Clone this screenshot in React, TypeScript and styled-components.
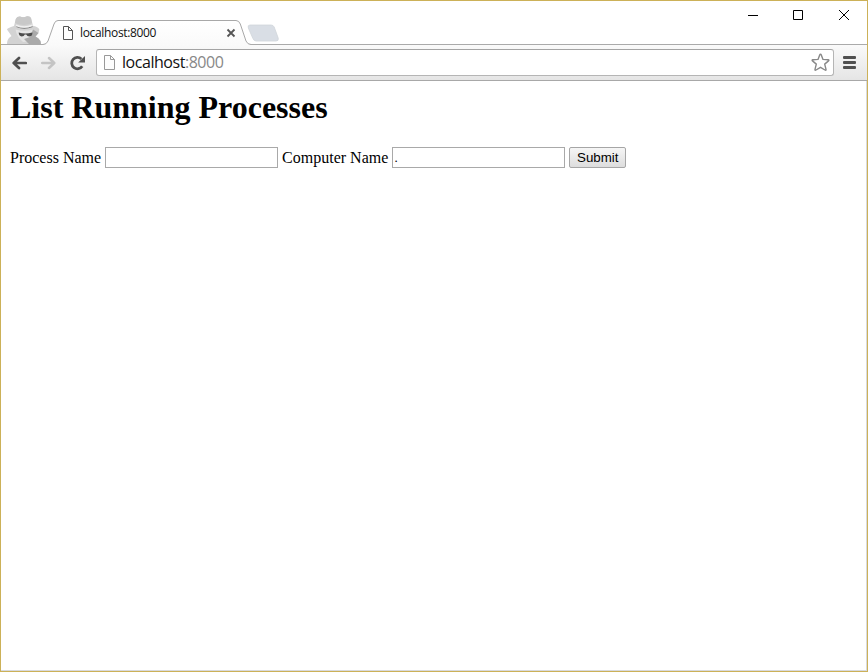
import React from "react";
import styled, { createGlobalStyle } from "styled-components";

const GlobalStyle = createGlobalStyle`
  * { box-sizing: border-box; }
  body { margin: 0; background: #fff; }
`;

const BrowserWindow = styled.div`
  display: flex;
  flex-direction: column;
  width: 868px;
  height: 672px;
  border: 1px solid #ccb158;
  background: #fff;
  overflow: hidden;
`;

const TabStrip = styled.div`
  display: flex;
  align-items: flex-end;
  flex: none;
  height: 44px;
  padding-left: 4px;
  border-bottom: 1px solid #aaa;
`;

const Incognito = styled.svg`
  display: block;
  flex: none;
  width: 38px;
  height: 29px;
`;

const Tab = styled.div`
  position: relative;
  display: flex;
  align-items: center;
  flex: none;
  width: 208px;
  height: 25px;
  margin-bottom: -1px;
  padding: 0 0 0 20px;
`;

const TabShape = styled.svg`
  position: absolute;
  left: 0;
  top: 0;
  width: 208px;
  height: 25px;
`;

const TabTitle = styled.span`
  position: relative;
  flex: 1;
  margin-left: 7px;
  color: #111;
  font: 12px/16px "Open Sans", "Noto Sans", sans-serif;
  letter-spacing: -0.34px;
`;

const NewTab = styled.svg`
  display: block;
  flex: none;
  width: 34px;
  height: 18px;
  margin: 0 0 2px -5px;
`;

const WindowControls = styled.div`
  display: flex;
  align-self: flex-start;
  align-items: center;
  gap: 34px;
  height: 28px;
  margin-left: auto;
  padding-right: 17px;
`;

const Glyph = styled.svg<{ $w: number; $h: number }>`
  position: relative;
  display: block;
  flex: none;
  width: ${(p) => p.$w}px;
  height: ${(p) => p.$h}px;
`;

const Toolbar = styled.div`
  display: flex;
  align-items: center;
  flex: none;
  height: 36px;
  padding: 0 10px;
  border-bottom: 1px solid #a8a8a8;
  background: linear-gradient(#fafafa, #e5e5e5);
`;

const NavButtons = styled.div`
  display: flex;
  align-items: center;
  flex: none;
  gap: 13px;
  width: 85px;
`;

const AddressBar = styled.div`
  display: flex;
  align-items: center;
  width: 738px;
  height: 27px;
  margin-right: 9px;
  padding: 0 3px 0 7px;
  border: 1px solid #b5b5b5;
  border-top-color: #a4a4a4;
  border-radius: 3px;
  background: #fff;
`;

const Url = styled.span`
  flex: 1;
  margin: -1px 0 0 7px;
  color: #111;
  font: 16px/22px "Open Sans", "Noto Sans", sans-serif;
  letter-spacing: -0.46px;
`;

const Port = styled.span`
  color: #888;
`;

const Page = styled.main`
  flex: 1;
  padding: 8px 9px;
  border: solid #d8dade;
  border-width: 0 1px 1px 0;
  color: #000;
  font: 16px/18px "Liberation Serif", "Times New Roman", serif;
`;

const Heading = styled.h1`
  margin: 0 0 21px;
  font-size: 32px;
  line-height: 37px;
  font-weight: bold;
`;

const Form = styled.form`
  display: flex;
  align-items: center;
  gap: 4px;
  height: 21px;
`;

const Label = styled.label`
  flex: none;
  line-height: 20px;
`;

const TextInput = styled.input`
  flex: none;
  width: 173px;
  height: 21px;
  margin: 0;
  padding: 1px;
  border: 1px solid #a9a9a9;
  border-radius: 0;
  outline: none;
  background: #fff;
  color: #000;
  font: 13.33px "Liberation Sans", Arial, sans-serif;
`;

const SubmitButton = styled.button`
  flex: none;
  width: 57px;
  height: 21px;
  margin: 0;
  padding: 0;
  border: 1px solid #a6a6a6;
  border-radius: 2px;
  background: linear-gradient(#f6f6f6, #dddddd);
  color: #000;
  font: 13.33px/17px "Liberation Sans", Arial, sans-serif;
`;

const PageIcon = ({ stroke, w, h }: { stroke: string; w: number; h: number }) => (
  <Glyph $w={w} $h={h} viewBox={`0 0 ${w} ${h}`} fill="#fdfdfd" stroke={stroke}>
    <path d={`M.5.5H${w - 4.5}L${w - 0.5} 4.5V${h - 0.5}H.5Z`} />
    <path d={`M${w - 4.5}.5V4.5H${w - 0.5}`} fill="none" />
  </Glyph>
);

export default function App() {
  return (
    <>
      <GlobalStyle />
      <BrowserWindow>
        <TabStrip>
          <Incognito viewBox="0 0 38 29">
            <path d="M2 29Q2 24.5 4.5 22.5L6.5 21 2 14.5Q2 13 9 11L10.8 4Q12 1.5 15 1.6Q18.5 3 22 1.2Q25 .8 26 3L28 10.8Q34 12.5 34.3 14.5L33.5 18 30.5 21.5 33.5 23.5Q36 25.5 36 29Z" fill="#d3d3d3" />
            <path d="M10.8 4Q12 1.5 15 1.6Q18.5 3 22 1.2Q25 .8 26 3L27 8Q19 12 10 8Z" fill="#c8c8c8" />
            <path d="M10.5 14.5Q19 17 28 14.5L27 21 22 26.5 18 27 14 23Q11.5 20 10.5 14.5Z" fill="#e4e4e4" />
            <path d="M28 14.5 33.5 18 30.5 21.5 33.5 23.5Q36 25.5 36 29H24L19 24 25 22Z" fill="#aaa" />
            <path d="M11.5 11.5Q19 15 27.5 11.5" fill="none" stroke="#777" strokeWidth="1.2" />
            <path d="M11 10.2Q19 13.8 27.5 10.2" fill="none" stroke="#efefef" strokeWidth="1.5" />
            <path d="M13.7 17.6Q17 18.6 20.3 18.6T27.4 17.6Q27.5 21.4 24.6 21.5Q22 21.5 21.2 19.6H19.8Q19 21.5 16.7 21.5Q13.7 21.2 13.7 17.6Z" fill="#4b4b4b" />
          </Incognito>
          <Tab>
            <TabShape viewBox="0 0 208 25">
              <defs>
                <linearGradient id="tabFill" x1="0" y1="0" x2="0" y2="1">
                  <stop offset="0" stopColor="#fff" />
                  <stop offset="1" stopColor="#fafafa" />
                </linearGradient>
              </defs>
              <path d="M0 25V24.5Q3.5 24.5 5 21L11 4Q12.2 .5 15 .5H193Q196 .5 197.3 4L203 21Q204.5 24.5 208 24.5V25Z" fill="url(#tabFill)" />
              <path d="M0 24.5Q3.5 24.5 5 21L11 4Q12.2 .5 15 .5H193Q196 .5 197.3 4L203 21Q204.5 24.5 208 24.5" fill="none" stroke="#a8a8a8" />
            </TabShape>
            <PageIcon stroke="#555" w={10} h={14} />
            <TabTitle>localhost:8000</TabTitle>
            <Glyph $w={28} $h={10} viewBox="0 0 28 10" fill="none" stroke="#555" strokeWidth="1.8">
              <path d="M4.5 1.5 11.5 8.5M11.5 1.5 4.5 8.5" />
            </Glyph>
          </Tab>
          <NewTab viewBox="0 0 34 18">
            <path d="M4 1H25Q27.3 1 28.2 3L32.2 14Q33 17 30 17H10Q7.7 17 6.7 14L2.3 4Q1.4 1 4 1Z" fill="#d9dee5" stroke="#d0d5db" strokeWidth=".8" />
          </NewTab>
          <WindowControls>
            <Glyph $w={12} $h={12} viewBox="0 0 12 12" stroke="#000"><path d="M1 6.5H11" /></Glyph>
            <Glyph $w={11} $h={10} viewBox="0 0 11 10" fill="none" stroke="#000"><path d="M.5.5H9.5V9.5H.5Z" /></Glyph>
            <Glyph $w={12} $h={12} viewBox="0 0 12 12" stroke="#000"><path d="M1 1 11 11M11 1 1 11" /></Glyph>
          </WindowControls>
        </TabStrip>
        <Toolbar>
          <NavButtons>
            <Glyph $w={16} $h={14} viewBox="0 0 16 14" fill="none" stroke="#505050" strokeWidth="2.7" strokeLinecap="round" strokeLinejoin="round">
              <path d="M8 2 2.7 7 8 12M3 7H14.8" />
            </Glyph>
            <Glyph $w={16} $h={14} viewBox="0 0 16 14" fill="none" stroke="#c4c4c4" strokeWidth="2.5" strokeLinecap="round" strokeLinejoin="round">
              <path d="M9 2 14.3 7 9 12M14 7H2.2" />
            </Glyph>
            <Glyph $w={16} $h={16} viewBox="0 0 16 16">
              <path d="M13.2 11.2A5.7 5.7 0 1 1 12.4 4" fill="none" stroke="#505050" strokeWidth="2.8" />
              <path d="M16 1V7.6H9.2Z" fill="#505050" />
            </Glyph>
          </NavButtons>
          <AddressBar>
            <PageIcon stroke="#999" w={11} h={15} />
            <Url>localhost<Port>:8000</Port></Url>
            <Glyph $w={19} $h={19} viewBox="0 0 19 19" fill="#fff" stroke="#888" strokeWidth="1.4" strokeLinejoin="round">
              <path d="M9.5 1.2Q10 1.2 10.3 2L12 6.4 17.2 6.8Q18.4 7 17.5 7.9L13.7 11.1 15 16.3Q15.2 17.7 14 17L9.5 14.3 5 17Q3.8 17.7 4 16.3L5.3 11.1 1.5 7.9Q.6 7 1.8 6.8L7 6.4 8.7 2Q9 1.2 9.5 1.2Z" />
            </Glyph>
          </AddressBar>
          <Glyph $w={13} $h={13} viewBox="0 0 13 13" fill="#505050">
            <rect width="13" height="3" rx="1" />
            <rect y="5" width="13" height="3" rx="1" />
            <rect y="10" width="13" height="3" rx="1" />
          </Glyph>
        </Toolbar>
        <Page>
          <Heading>List Running Processes</Heading>
          <Form onSubmit={(e) => e.preventDefault()}>
            <Label htmlFor="process">Process Name</Label>
            <TextInput id="process" type="text" />
            <Label htmlFor="computer">Computer Name</Label>
            <TextInput id="computer" type="text" defaultValue="." />
            <SubmitButton type="submit">Submit</SubmitButton>
          </Form>
        </Page>
      </BrowserWindow>
    </>
  );
}
